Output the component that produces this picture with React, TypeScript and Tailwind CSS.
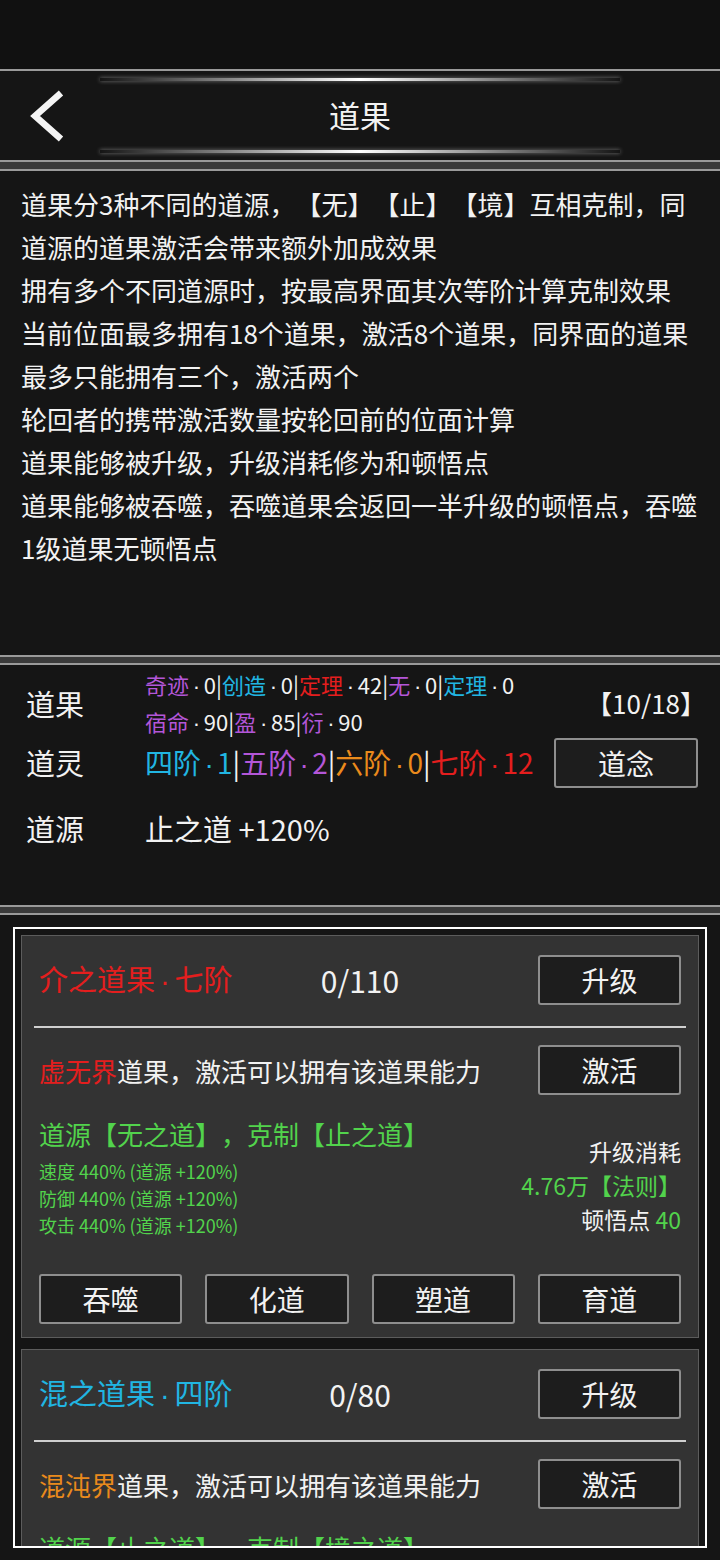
import React from 'react';

type Tone = 'p' | 'c' | 'r' | 'o' | 'w';

// full class names per tone, so tailwind sees them
const toneClass: Record<Tone, string> = {
  p: 'text-[#b356d8]',
  c: 'text-[#21b5e2]',
  r: 'text-[#e41e1e]',
  o: 'text-[#ea8a1c]',
  w: 'text-[#f2f2f2]',
};

// latin middle dot with some air on both sides
const Dot = ({ tight = false }: { tight?: boolean }) => (
  <span className={`${tight ? 'px-[0.12em]' : 'px-[0.17em]'} font-['Liberation_Sans',sans-serif]`}>·</span>
);
const Bar = () => <span className="text-[#f2f2f2]">|</span>;

const Btn: React.FC<{ children: React.ReactNode; className?: string }> = ({ children, className = '' }) => (
  <div
    className={`flex h-[50px] items-center justify-center rounded-[3px] border-2 border-[#8e8e8e] bg-[#1d1d1d] text-[28px] text-[#f2f2f2] ${className}`}
  >
    {children}
  </div>
);

const Band = ({ h = 'h-[10px]' }: { h?: string }) => (
  <div className={`${h} border-y-2 border-[#9a9a9a] bg-[#3a3a3a]`} />
);

const Glow = () => (
  <div className="mx-[100px] h-[3px] bg-gradient-to-r from-transparent via-white to-transparent shadow-[0_0_4px_rgba(255,255,255,0.45)]" />
);

const descLines = [
  '道果分3种不同的道源，【无】【止】【境】互相克制，同',
  '道源的道果激活会带来额外加成效果',
  '拥有多个不同道源时，按最高界面其次等阶计算克制效果',
  '当前位面最多拥有18个道果，激活8个道果，同界面的道果',
  '最多只能拥有三个，激活两个',
  '轮回者的携带激活数量按轮回前的位面计算',
  '道果能够被升级，升级消耗修为和顿悟点',
  '道果能够被吞噬，吞噬道果会返回一半升级的顿悟点，吞噬',
  '1级道果无顿悟点',
];

const fruitLine1: [string, string, Tone][] = [
  ['奇迹', '0', 'p'],
  ['创造', '0', 'c'],
  ['定理', '42', 'r'],
  ['无', '0', 'p'],
  ['定理', '0', 'c'],
];
const fruitLine2: [string, string, Tone][] = [
  ['宿命', '90', 'p'],
  ['盈', '85', 'p'],
  ['衍', '90', 'p'],
];
const spirits: [string, string, Tone][] = [
  ['四阶', '1', 'c'],
  ['五阶', '2', 'p'],
  ['六阶', '0', 'o'],
  ['七阶', '12', 'r'],
];

const FruitLine = ({ items }: { items: [string, string, Tone][] }) => (
  <div className="whitespace-nowrap">
    {items.map(([name, n, t], i) => (
      <React.Fragment key={i}>
        {i > 0 && <Bar />}
        <span className={toneClass[t]}>{name}</span>
        <span className="text-[#f2f2f2]">
          <Dot />
          {n}
        </span>
      </React.Fragment>
    ))}
  </div>
);

interface CardProps {
  name: string;
  grade: string;
  tone: Tone;
  count: string;
  realm: string;
  realmTone: Tone;
  source: string;
  counter: string;
}

const green = 'text-[#52d34c]';

function FruitCard({ name, grade, tone, count, realm, realmTone, source, counter }: CardProps) {
  return (
    <div className="shrink-0 border border-[#5c5c5c] bg-[#333333] pt-[19px] pb-[13px]">
      <div className="grid grid-cols-[1fr_auto_1fr] items-center px-[17px]">
        <div className={`text-[29px] whitespace-nowrap ${toneClass[tone]}`}>
          {name}
          <Dot />
          {grade}
        </div>
        <div className="text-[30px] text-[#f2f2f2]">{count}</div>
        <Btn className="w-[143px] justify-self-end">升级</Btn>
      </div>

      <div className="mx-[12px] mt-[21px] h-[2px] bg-[#cfcfcf]" />

      <div className="mt-[17px] flex items-center justify-between px-[17px]">
        <div className="text-[26px] whitespace-nowrap">
          <span className={toneClass[realmTone]}>{realm}</span>
          <span className="text-[#f2f2f2]">道果，激活可以拥有该道果能力</span>
        </div>
        <Btn className="w-[143px]">激活</Btn>
      </div>

      <div className="mt-[21px] flex items-end justify-between px-[17px]">
        <div className={green}>
          <div className="text-[26px] leading-[36px] whitespace-nowrap">
            道源【{source}】，克制【{counter}】
          </div>
          <div className="mt-[6px] text-[18px] leading-[27px]">
            <div>速度 440% (道源 +120%)</div>
            <div>防御 440% (道源 +120%)</div>
            <div>攻击 440% (道源 +120%)</div>
          </div>
        </div>
        <div className="mb-[3px] text-right text-[23px] leading-[34px]">
          <div className="text-[#f2f2f2]">升级消耗</div>
          <div className={green}>4.76万【法则】</div>
          <div className="text-[#f2f2f2]">
            顿悟点 <span className={green}>40</span>
          </div>
        </div>
      </div>

      <div className="mt-[35px] grid grid-cols-4 gap-[23px] px-[17px]">
        <Btn>吞噬</Btn>
        <Btn>化道</Btn>
        <Btn>塑道</Btn>
        <Btn>育道</Btn>
      </div>
    </div>
  );
}

export default function App() {
  return (
    <div className="h-[1560px] w-[720px] overflow-hidden bg-[#111111] font-['Noto_Sans_CJK_SC',sans-serif] text-[#f2f2f2] [text-spacing-trim:space-all]">
      <div className="h-[69px]" />

      {/* header */}
      <div className="flex h-[91px] flex-col border-t-2 border-[#9a9a9a] bg-[#151515] pt-[7px] pb-[7px]">
        <Glow />
        <div className="grid flex-1 grid-cols-[1fr_auto_1fr] items-center">
          <div className="pl-[28px]">
            <svg width="38" height="52" viewBox="0 0 38 52">
              <polyline points="33,3 7,26 33,49" fill="none" stroke="#f4f4f4" strokeWidth="6.5" strokeLinejoin="miter" />
            </svg>
          </div>
          <div className="text-[31px]">道果</div>
          <div />
        </div>
        <Glow />
      </div>

      <Band h="h-[11px]" />

      {/* rules */}
      <div className="h-[484px] bg-[#151515] px-[21px] pt-[11px] text-[26px] leading-[43px]">
        {descLines.map((l, i) => (
          <div key={i} className="whitespace-nowrap">
            {l}
          </div>
        ))}
      </div>

      <Band />

      {/* stats */}
      <div className="h-[240px] bg-[#151515] pt-[5px] pr-[22px] pl-[26px]">
        <div className="flex h-[68px] items-center">
          <div className="w-[119px] shrink-0 text-[29px]">道果</div>
          <div className="flex-1 text-[22px] leading-[34px]">
            <FruitLine items={fruitLine1} />
            <FruitLine items={fruitLine2} />
          </div>
          <div className="mr-[-8px] mb-[4px] text-[26px]">【10/18】</div>
        </div>
        <div className="flex h-[50px] items-center">
          <div className="w-[119px] shrink-0 text-[29px]">道灵</div>
          <div className="flex-1 whitespace-nowrap text-[28px]">
            {spirits.map(([name, n, t], i) => (
              <React.Fragment key={i}>
                {i > 0 && <Bar />}
                <span className={toneClass[t]}>
                  {name}
                  <Dot tight />
                  {n}
                </span>
              </React.Fragment>
            ))}
          </div>
          <Btn className="w-[144px]">道念</Btn>
        </div>
        <div className="mt-[21px] flex h-[40px] items-center">
          <div className="w-[119px] shrink-0 text-[29px]">道源</div>
          <div className="text-[29px]">止之道 +120%</div>
        </div>
      </div>

      <Band />

      {/* fruit list */}
      <div className="h-[645px] bg-[#151515] px-[13px] pt-[12px]">
        <div className="flex h-[621px] flex-col gap-[11px] overflow-hidden border-2 border-white px-[6px] pt-[6px]">
          <FruitCard
            name="介之道果"
            grade="七阶"
            tone="r"
            count="0/110"
            realm="虚无界"
            realmTone="r"
            source="无之道"
            counter="止之道"
          />
          <FruitCard
            name="混之道果"
            grade="四阶"
            tone="c"
            count="0/80"
            realm="混沌界"
            realmTone="o"
            source="止之道"
            counter="境之道"
          />
        </div>
      </div>
    </div>
  );
}
